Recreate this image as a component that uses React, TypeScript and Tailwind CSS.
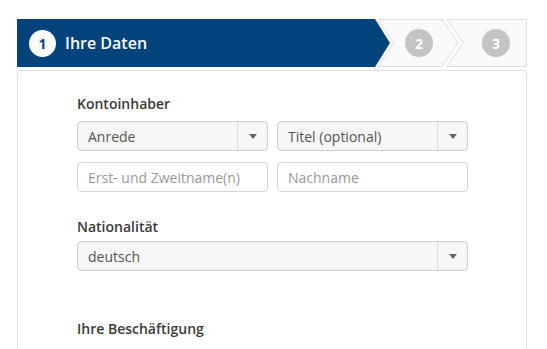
import React from 'react';

function Caret() {
  return (
    <svg width="8" height="5" viewBox="0 0 8 5">
      <path d="M0 0h8L4 5z" fill="#666" />
    </svg>
  );
}

function SelectBox({ value, wide }: { value: string; wide?: boolean }) {
  return (
    <div className={`${wide ? 'w-[391px]' : 'w-[191px]'} h-[30px] flex items-stretch rounded-[4px] border border-[#cfcfcf] bg-[#f6f6f6]`}>
      <div className="flex-1 flex items-center pl-[10px] text-[14px] text-[#555]">{value}</div>
      <div className="w-[30px] flex items-center justify-center border-l border-[#dcdcdc]">
        <Caret />
      </div>
    </div>
  );
}

function Field({ placeholder }: { placeholder: string }) {
  return (
    <div className="w-[191px] h-[30px] flex items-center pl-[10px] rounded-[4px] border border-[#d4d4d4] bg-white text-[14px] text-[#999]">
      {placeholder}
    </div>
  );
}

function Label({ children }: { children: React.ReactNode }) {
  return <div className="h-[20px] leading-[20px] text-[14px] font-semibold text-[#3a3a3a]">{children}</div>;
}

export default function App() {
  return (
    <div className="w-[547px] h-[349px] overflow-hidden bg-white font-['Open_Sans',sans-serif]">
      <div className="ml-[17px] mt-[19px] w-[510px]">
        {/* Stepper */}
        <div className="relative h-[48px]">
          <svg className="absolute inset-0" width="510" height="48" viewBox="0 0 510 48">
            <polygon points="0,0 358,0 373,24 358,48 0,48" fill="#02437c" />
            <polygon points="361,0.5 425,0.5 441,24 425,47.5 361,47.5 377,24" fill="#f9f9f9" stroke="#dedede" />
            <polygon points="430,0.5 509.5,0.5 509.5,47.5 430,47.5 446,24" fill="#f9f9f9" stroke="#dedede" />
          </svg>
          <div className="relative flex h-full items-center">
            <div className="w-[388px] flex items-center gap-[9px] pl-[12px]">
              <div className="w-[27px] h-[27px] rounded-full bg-white flex items-center justify-center text-[14px] font-bold text-[#02437c]">
                1
              </div>
              <span className="text-[16px] font-semibold text-white">Ihre Daten</span>
            </div>
            <div className="w-[28px] h-[28px] rounded-full bg-[#c4c4c4] flex items-center justify-center text-[14px] font-bold text-white">
              2
            </div>
            <div className="ml-[49px] w-[28px] h-[28px] rounded-full bg-[#c4c4c4] flex items-center justify-center text-[14px] font-bold text-white">
              3
            </div>
          </div>
        </div>

        {/* Panel */}
        <div className="mt-[3px] h-[300px] rounded-t-[3px] border border-[#e0e0e0] pl-[59px] pt-[23px]">
          <Label>Kontoinhaber</Label>
          <div className="mt-[7px] flex gap-[9px]">
            <SelectBox value="Anrede" />
            <SelectBox value="Titel (optional)" />
          </div>
          <div className="mt-[11px] flex gap-[9px]">
            <Field placeholder="Erst- und Zweitname(n)" />
            <Field placeholder="Nachname" />
          </div>

          <div className="mt-[25px]">
            <Label>Nationalität</Label>
          </div>
          <div className="mt-[4px]">
            <SelectBox value="deutsch" wide />
          </div>

          <div className="mt-[48px]">
            <Label>Ihre Beschäftigung</Label>
          </div>
        </div>
      </div>
    </div>
  );
}
